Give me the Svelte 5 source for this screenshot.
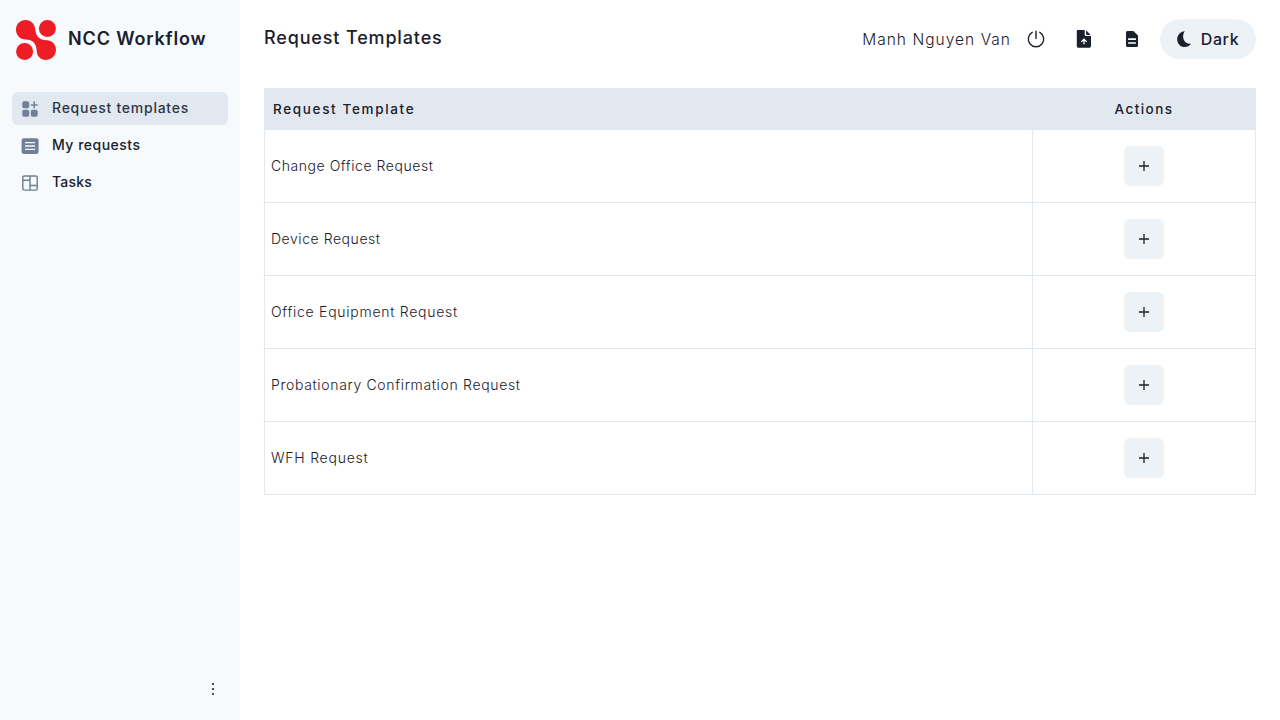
<script lang="ts">
  const menu = [
    { label: 'Request templates', icon: 'templates', spacing: 0.75 },
    { label: 'My requests', icon: 'requests', spacing: 0.5 },
    { label: 'Tasks', icon: 'tasks', spacing: 0.2 },
  ];
  const requests = [
    { name: 'Change Office Request', spacing: 0.55 },
    { name: 'Device Request', spacing: 0.55 },
    { name: 'Office Equipment Request', spacing: 0.73 },
    { name: 'Probationary Confirmation Request', spacing: 0.67 },
    { name: 'WFH Request', spacing: 0.77 },
  ];
</script>

<div class="layout">
  <aside>
    <div class="brand">
      <svg width="40" height="40" viewBox="0 0 40 40" fill="#ee1c25">
        <path d="M9.500 0C15.500 0 19 4.500 19.300 9.500C19.700 16.500 24 20.300 30.500 20.300C36 20.300 40 24.500 40 30A10 10 0 0 1 30 40C24.500 40 20.700 36 20.700 30.500C20.300 23.500 16.500 19.600 9.500 19.600C4.200 19.600 0 15.500 0 9.800C0 4.300 4 0 9.500 0Z" />
        <circle cx="31.400" cy="8.600" r="8.500" />
        <circle cx="8.600" cy="31.400" r="8.500" />
      </svg>
      <span>NCC Workflow</span>
    </div>
    <nav>
      {#each menu as item, i}
        <div class="item" class:active={i === 0}>
          <svg width="20" height="20" viewBox="0 0 20 20" fill="#718096">
            {#if item.icon === 'templates'}
              <rect x="2.300" y="2.300" width="6.900" height="6.900" rx="1.700" />
              <rect x="2.300" y="10.800" width="6.900" height="6.900" rx="1.700" />
              <rect x="10.800" y="10.800" width="6.900" height="6.900" rx="1.700" />
              <path d="M14.200 3v5.800M11.300 5.900h5.800" fill="none" stroke="#718096" stroke-width="1.500" stroke-linecap="round" />
            {:else if item.icon === 'requests'}
              <rect x="1.600" y="2.200" width="17" height="15.700" rx="2.200" />
              <path d="M5 6.600h10M5 10h10M5 13.400h10" stroke="#f7fafc" stroke-width="1.300" />
            {:else}
              <path d="M4.200 2.900h11.600a1.400 1.400 0 0 1 1.400 1.400v11.400a1.400 1.400 0 0 1-1.400 1.400H4.200a1.400 1.400 0 0 1-1.400-1.400V4.300a1.400 1.400 0 0 1 1.400-1.400ZM10 3v14M3 7.200h7M10 12.500h7" fill="none" stroke="#718096" stroke-width="1.450" />
            {/if}
          </svg>
          <span style:letter-spacing="{item.spacing}px">{item.label}</span>
        </div>
      {/each}
    </nav>
    <div class="more">
      <svg width="16" height="16" viewBox="0 0 16 16" fill="#4a4f57">
        <path d="M7 2h2v2H7zM7 7h2v2H7zM7 12h2v2H7z" />
      </svg>
    </div>
  </aside>

  <main>
    <header>
      <h1>Request Templates</h1>
      <div class="tools">
        <span class="user">Manh Nguyen Van</span>
        <span class="icon power">
          <svg width="20" height="20" viewBox="0 0 20 20" fill="none" stroke="#1a202c" stroke-width="1.400" stroke-linecap="round">
            <path d="M10 2.200v7.300M6.200 3.300A7.700 7.700 0 1 0 13.800 3.300" />
          </svg>
        </span>
        <span class="icon">
          <svg width="20" height="20" viewBox="0 0 20 20" fill="#1a202c">
            <path d="M3.800 1h6.900v4.500a1.500 1.500 0 0 0 1.500 1.500H17v10.300a1.400 1.400 0 0 1-1.400 1.400H4.200A1.400 1.400 0 0 1 2.800 17.300V2A1 1 0 0 1 3.800 1ZM12.100 1.300 16.700 5.900h-3.600a1 1 0 0 1-1-1Z" />
            <path d="M10 15.200v-4.600M7.300 12.900l2.700-2.700 2.700 2.700" fill="none" stroke="#fff" stroke-width="1.300" />
          </svg>
        </span>
        <span class="icon">
          <svg width="20" height="20" viewBox="0 0 20 20" fill="#1a202c">
            <path d="M5.500 2h5.900L16 6.600v10a1.500 1.500 0 0 1-1.500 1.500h-9A1.500 1.500 0 0 1 4 16.600V3.500A1.500 1.500 0 0 1 5.500 2Z" />
            <path d="M6.100 10.100h7.800M6.100 14h7.800" stroke="#fff" stroke-width="1.600" />
          </svg>
        </span>
        <button class="mode">
          <svg width="16" height="16" viewBox="0.8 0 16 16" fill="#1a202c">
            <path d="M8.600.2C5.600 4 6.700 10.500 11.200 12.300c1.300.5 2.400.6 3.600.4C13.300 14.900 11 16 8.400 16 4.100 16 1 12.500 1 8.200 1 4 4.200.3 8.600.2Z" />
          </svg>
          <span>Dark</span>
        </button>
      </div>
    </header>

    <div class="table">
      <div class="row head">
        <div class="cell">Request Template</div>
        <div class="cell act">Actions</div>
      </div>
      {#each requests as r}
        <div class="row">
          <div class="cell" style:letter-spacing="{r.spacing}px">{r.name}</div>
          <div class="cell act">
            <button class="add" aria-label="Add">
              <svg width="12" height="12" viewBox="0 0 12 12"><path d="M6 1v10M1 6h10" stroke="#1a202c" stroke-width="1.300" /></svg>
            </button>
          </div>
        </div>
      {/each}
    </div>
  </main>
</div>

<style>
  :global(body) { margin: 0; background: #fff; }
  .layout { display: flex; width: 100%; height: 720px; box-sizing: border-box; font-family: Inter, sans-serif; color: #1a202c; white-space: nowrap; overflow: hidden; }
  .layout * { box-sizing: border-box; }
  svg { display: block; flex: none; }
  button { border: 0; padding: 0; font: inherit; color: inherit; display: flex; align-items: center; justify-content: center; background: #edf2f7; }
  aside { width: 240px; flex: none; background: #f6fafd; padding: 20px 12px 23px; display: flex; flex-direction: column; }
  .brand { display: flex; align-items: center; gap: 12px; height: 40px; padding-left: 4px; font-size: 18px; font-weight: 600; letter-spacing: 0.850px; line-height: 24px; }
  .brand span { margin-top: -3px; }
  nav { margin-top: 32px; display: flex; flex-direction: column; gap: 4px; }
  .item { display: flex; align-items: center; gap: 12px; height: 33px; padding-left: 8px; border-radius: 6px; font-size: 14px; font-weight: 550; line-height: 20px; }
  .item span { margin-top: -1px; }
  .active { background: #e2e8f0; color: #2d3748; }
  .more { margin-top: auto; height: 16px; padding-left: 193px; }
  main { flex: 1; min-width: 0; padding: 19px 24px; }
  header { display: flex; justify-content: space-between; height: 40px; align-items: center; }
  h1 { margin: -3px 0 0; font-size: 18px; line-height: 24px; font-weight: 550; letter-spacing: 0.850px; }
  .tools { display: flex; align-items: center; }
  .user { font-size: 15.500px; font-weight: 300; letter-spacing: 1.030px; }
  .icon { width: 40px; height: 40px; margin-right: 8px; display: flex; align-items: center; justify-content: center; }
  .power { margin-left: 5px; }
  .mode { width: 96px; height: 40px; border-radius: 20px; gap: 8px; font-size: 16px; font-weight: 550; letter-spacing: 0.600px; }
  .mode span { margin-top: -1px; }
  .table { margin-top: 29px; border: 1px solid #e2e8f0; border-top: 0; font-size: 14px; line-height: 18px; }
  .row { display: grid; grid-template-columns: 768px 1fr; height: 73px; border-bottom: 1px solid #e2e8f0; }
  .row:last-child { border-bottom: 0; height: 72px; }
  .cell { display: flex; align-items: center; padding: 0 0 1px 6px; border-right: 1px solid #e2e8f0; font-weight: 300; }
  .act { justify-content: center; padding: 0; border-right: 0; }
  .row.head { height: 42px; background: #e2e8f0; }
  .head .cell { font-size: 13.500px; font-weight: 550; letter-spacing: 1.650px; padding: 0 0 0 8px; border: 0; }
  .head .act { padding-left: 0; letter-spacing: 1.450px; }
  .add { width: 40px; height: 40px; border-radius: 6px; }
</style>
